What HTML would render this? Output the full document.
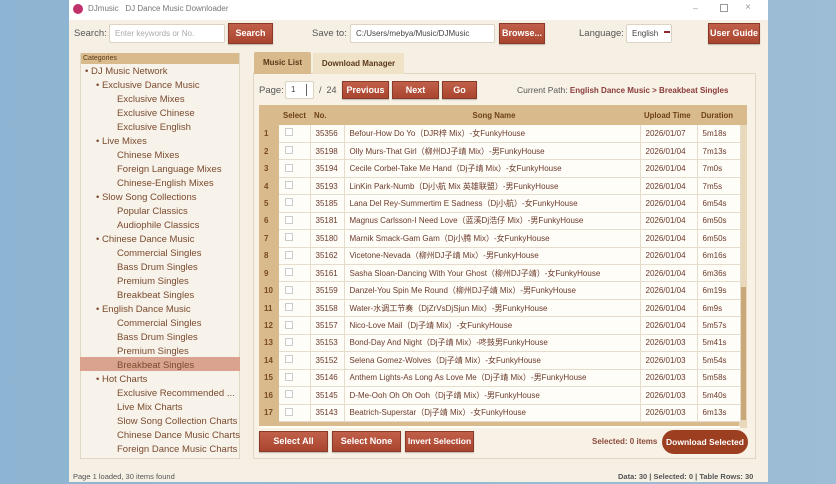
<!DOCTYPE html>
<html><head><meta charset="utf-8"><style>
*{box-sizing:border-box;margin:0;padding:0}
body{width:836px;height:484px;overflow:hidden;background:linear-gradient(90deg,#8db4d2,#9dbcd6);font-family:"Liberation Sans","Noto Sans CJK SC",sans-serif;position:relative}
.a{position:absolute;white-space:nowrap}
.win{position:absolute;left:69px;top:0;width:699px;height:482px;background:#f6f0e4}
.title{position:absolute;left:0;top:0;width:699px;height:20px;background:#fff}
.btn{position:absolute;white-space:nowrap;overflow:hidden;background:linear-gradient(#c1604a,#a9452f);color:#fff;font-weight:bold;font-size:9px;text-align:center;border:1px solid #8a3a28;box-shadow:0 1px 1px rgba(0,0,0,.25)}
.inp{position:absolute;background:#fff;border:1px solid #ddd3c2;border-radius:2px;font-size:8px;color:#444;padding-left:5px;white-space:nowrap}
.lbl{position:absolute;font-size:9.5px;color:#555;white-space:nowrap}
.tree div{position:absolute;font-size:9.5px;color:#7a4a2e;white-space:nowrap}
table{border-collapse:collapse;position:absolute;left:259px;top:105px;font-size:8px;color:#6b3a2a}
td{height:17.45px;border-bottom:1px solid #e5dccb;border-right:1px solid #e5dccb;background:#fffdf8;padding-left:5px;white-space:nowrap;overflow:hidden}
td.n{background:#d8ba8c;color:#7a4a20;font-weight:bold;padding-left:5px;border:none}
th{height:20px;background:#d8ba8c;color:#6e4218;font-size:7.8px;text-align:left;padding-left:4px}
.cb{display:inline-block;width:8px;height:8px;border:1px solid #ccc;background:#fff;margin-left:1px}
</style></head><body>
<div class="win">
<div class="title">
<div class="a" style="left:4px;top:4px;width:10px;height:10px;border-radius:50%;background:#c0306a"></div>
<div class="a" style="left:19px;top:4px;font-size:8px;color:#777">DJmusic &nbsp; DJ Dance Music Downloader</div>
<div class="a" style="left:624px;top:3px;font-size:9px;color:#999">&#8211;</div>
<div class="a" style="left:651px;top:4px;width:8px;height:8px;border:1px solid #999"></div>
<div class="a" style="left:676px;top:2px;font-size:10px;color:#999">&#215;</div>
</div>
<div class="lbl" style="left:5px;top:28px">Search:</div>
<div class="inp" style="left:40px;top:24px;width:116px;height:19px;line-height:17px;color:#aaa">Enter keywords or No.</div>
<div class="btn" style="left:159px;top:23px;width:45px;height:21px;line-height:19px">Search</div>
<div class="lbl" style="left:243px;top:28px">Save to:</div>
<div class="inp" style="left:281px;top:24px;width:145px;height:19px;line-height:17px">C:/Users/mebya/Music/DJMusic</div>
<div class="btn" style="left:430px;top:23px;width:46px;height:21px;line-height:19px">Browse...</div>
<div class="lbl" style="left:510px;top:28px">Language:</div>
<div class="inp" style="left:557px;top:24px;width:46px;height:19px;line-height:17px">English<span style="position:absolute;left:37px;top:6px;width:6px;height:2px;background:#8a2a2a"></span></div>
<div class="btn" style="left:639px;top:23px;width:52px;height:21px;line-height:19px">User Guide</div>

<div class="a" style="left:11px;top:53px;width:160px;height:406px;border:1px solid #e0d6c4;background:#f8f3ea"></div>
<div class="a" style="left:12px;top:53px;width:158px;height:11px;background:#d8ba8c;font-size:7px;color:#5a3a1a;padding-left:2px;line-height:11px">Categories</div>
<div class="a" style="left:11px;top:357px;width:160px;height:14px;background:#d9a38f"></div>
<div class="tree">
<div style="left:16px;top:66px">&#8226; DJ Music Network</div>
<div style="left:27px;top:80px">&#8226; Exclusive Dance Music</div>
<div style="left:48px;top:94px">Exclusive Mixes</div>
<div style="left:48px;top:108px">Exclusive Chinese</div>
<div style="left:48px;top:122px">Exclusive English</div>
<div style="left:27px;top:136px">&#8226; Live Mixes</div>
<div style="left:48px;top:150px">Chinese Mixes</div>
<div style="left:48px;top:164px">Foreign Language Mixes</div>
<div style="left:48px;top:178px">Chinese-English Mixes</div>
<div style="left:27px;top:192px">&#8226; Slow Song Collections</div>
<div style="left:48px;top:206px">Popular Classics</div>
<div style="left:48px;top:220px">Audiophile Classics</div>
<div style="left:27px;top:234px">&#8226; Chinese Dance Music</div>
<div style="left:48px;top:248px">Commercial Singles</div>
<div style="left:48px;top:262px">Bass Drum Singles</div>
<div style="left:48px;top:276px">Premium Singles</div>
<div style="left:48px;top:290px">Breakbeat Singles</div>
<div style="left:27px;top:304px">&#8226; English Dance Music</div>
<div style="left:48px;top:318px">Commercial Singles</div>
<div style="left:48px;top:332px">Bass Drum Singles</div>
<div style="left:48px;top:346px">Premium Singles</div>
<div style="left:48px;top:360px">Breakbeat Singles</div>
<div style="left:27px;top:374px">&#8226; Hot Charts</div>
<div style="left:48px;top:388px">Exclusive Recommended ...</div>
<div style="left:48px;top:402px">Live Mix Charts</div>
<div style="left:48px;top:416px">Slow Song Collection Charts</div>
<div style="left:48px;top:430px">Chinese Dance Music Charts</div>
<div style="left:48px;top:444px">Foreign Dance Music Charts</div>
</div>

<div class="a" style="left:184px;top:73px;width:503px;height:386px;border:1px solid #e0d6c4;background:#f8f2e6"></div>
<div class="a" style="left:185px;top:52px;width:57px;height:22px;background:#d8ba8c;font-size:8px;font-weight:bold;color:#5a3a1a;text-align:center;line-height:22px;border-radius:2px 2px 0 0">Music List</div>
<div class="a" style="left:244px;top:53px;width:91px;height:21px;background:#efe2c6;font-size:8px;font-weight:bold;color:#5a3a1a;text-align:center;line-height:21px">Download Manager</div>
<div class="lbl" style="left:190px;top:85px">Page:</div>
<div class="inp" style="left:216px;top:81px;width:29px;height:18px;line-height:16px">1<span style="position:absolute;left:20px;top:2px;width:1px;height:12px;background:#666"></span></div>
<div class="lbl" style="left:250px;top:85px;font-size:9px">/ &nbsp;24</div>
<div class="btn" style="left:273px;top:81px;width:47px;height:18px;line-height:16px">Previous</div>
<div class="btn" style="left:323px;top:81px;width:47px;height:18px;line-height:16px">Next</div>
<div class="btn" style="left:373px;top:81px;width:35px;height:18px;line-height:16px">Go</div>
<div class="lbl" style="left:448px;top:85px;font-size:8.5px">Current Path: <b style="color:#8a3a3a;font-size:8px">English Dance Music &gt; Breakbeat Singles</b></div>

<div class="a" style="left:190px;top:105px;width:488px;height:323px;background:#d8ba8c"></div>
<div class="a" style="left:670px;top:125px;width:8px;height:303px;background:#e8d8bc"></div>
<div class="a" style="left:671px;top:287px;width:6px;height:133px;background:#c9a878"></div>
</div>

<table>
<tr><th style="width:20px"></th><th style="width:31px">Select</th><th style="width:34px">No.</th><th style="width:296px;text-align:center">Song Name</th><th style="width:57px">Upload Time</th><th style="width:43px">Duration</th></tr>
<tr><td class="n">1</td><td><span class="cb"></span></td><td>35356</td><td>Befour-How Do Yo（DJR梓 Mix）-女FunkyHouse</td><td>2026/01/07</td><td>5m18s</td></tr>
<tr><td class="n">2</td><td><span class="cb"></span></td><td>35198</td><td>Olly Murs-That Girl（柳州DJ子靖 Mix）-男FunkyHouse</td><td>2026/01/04</td><td>7m13s</td></tr>
<tr><td class="n">3</td><td><span class="cb"></span></td><td>35194</td><td>Cecile Corbel-Take Me Hand（Dj子靖 Mix）-女FunkyHouse</td><td>2026/01/04</td><td>7m0s</td></tr>
<tr><td class="n">4</td><td><span class="cb"></span></td><td>35193</td><td>LinKin Park-Numb（Dj小航 Mix 英雄联盟）-男FunkyHouse</td><td>2026/01/04</td><td>7m5s</td></tr>
<tr><td class="n">5</td><td><span class="cb"></span></td><td>35185</td><td>Lana Del Rey-Summertim E Sadness（Dj小航）-女FunkyHouse</td><td>2026/01/04</td><td>6m54s</td></tr>
<tr><td class="n">6</td><td><span class="cb"></span></td><td>35181</td><td>Magnus Carlsson-I Need Love（蓝溪Dj浩仔 Mix）-男FunkyHouse</td><td>2026/01/04</td><td>6m50s</td></tr>
<tr><td class="n">7</td><td><span class="cb"></span></td><td>35180</td><td>Marnik Smack-Gam Gam（Dj小腾 Mix）-女FunkyHouse</td><td>2026/01/04</td><td>6m50s</td></tr>
<tr><td class="n">8</td><td><span class="cb"></span></td><td>35162</td><td>Vicetone-Nevada（柳州DJ子靖 Mix）-男FunkyHouse</td><td>2026/01/04</td><td>6m16s</td></tr>
<tr><td class="n">9</td><td><span class="cb"></span></td><td>35161</td><td>Sasha Sloan-Dancing With Your Ghost（柳州DJ子靖）-女FunkyHouse</td><td>2026/01/04</td><td>6m36s</td></tr>
<tr><td class="n">10</td><td><span class="cb"></span></td><td>35159</td><td>Danzel-You Spin Me Round（柳州DJ子靖 Mix）-男FunkyHouse</td><td>2026/01/04</td><td>6m19s</td></tr>
<tr><td class="n">11</td><td><span class="cb"></span></td><td>35158</td><td>Water-水调工节奏（DjZrVsDjSjun Mix）-男FunkyHouse</td><td>2026/01/04</td><td>6m9s</td></tr>
<tr><td class="n">12</td><td><span class="cb"></span></td><td>35157</td><td>Nico-Love Mail（Dj子靖 Mix）-女FunkyHouse</td><td>2026/01/04</td><td>5m57s</td></tr>
<tr><td class="n">13</td><td><span class="cb"></span></td><td>35153</td><td>Bond-Day And Night（Dj子靖 Mix）-咚鼓男FunkyHouse</td><td>2026/01/03</td><td>5m41s</td></tr>
<tr><td class="n">14</td><td><span class="cb"></span></td><td>35152</td><td>Selena Gomez-Wolves（Dj子靖 Mix）-女FunkyHouse</td><td>2026/01/03</td><td>5m54s</td></tr>
<tr><td class="n">15</td><td><span class="cb"></span></td><td>35146</td><td>Anthem Lights-As Long As Love Me（Dj子靖 Mix）-男FunkyHouse</td><td>2026/01/03</td><td>5m58s</td></tr>
<tr><td class="n">16</td><td><span class="cb"></span></td><td>35145</td><td>D-Me-Ooh Oh Oh Ooh（Dj子靖 Mix）-男FunkyHouse</td><td>2026/01/03</td><td>5m40s</td></tr>
<tr><td class="n">17</td><td><span class="cb"></span></td><td>35143</td><td>Beatrich-Superstar（Dj子靖 Mix）-女FunkyHouse</td><td>2026/01/03</td><td>6m13s</td></tr>
</table>
<div class="a" style="left:259px;top:426px;width:481px;height:2px;background:#fffdf8"></div>

<div class="btn" style="left:259px;top:431px;width:69px;height:21px;line-height:19px">Select All</div>
<div class="btn" style="left:332px;top:431px;width:69px;height:21px;line-height:19px">Select None</div>
<div class="btn" style="left:405px;top:431px;width:69px;height:21px;line-height:19px;font-size:8.5px">Invert Selection</div>
<div class="a" style="left:592px;top:437px;font-size:8px;font-weight:bold;color:#8a4a3a">Selected: 0 items</div>
<div class="a" style="left:662px;top:430px;width:86px;height:24px;border-radius:12px;background:#9c3e20;color:#fff;font-weight:bold;font-size:8.5px;text-align:center;line-height:24px">Download Selected</div>
<div class="a" style="left:73px;top:472px;font-size:7.5px;color:#555">Page 1 loaded, 30 items found</div>
<div class="a" style="left:618px;top:472px;font-size:7.5px;font-weight:bold;color:#555">Data: 30 | Selected: 0 | Table Rows: 30</div>
</body></html>
